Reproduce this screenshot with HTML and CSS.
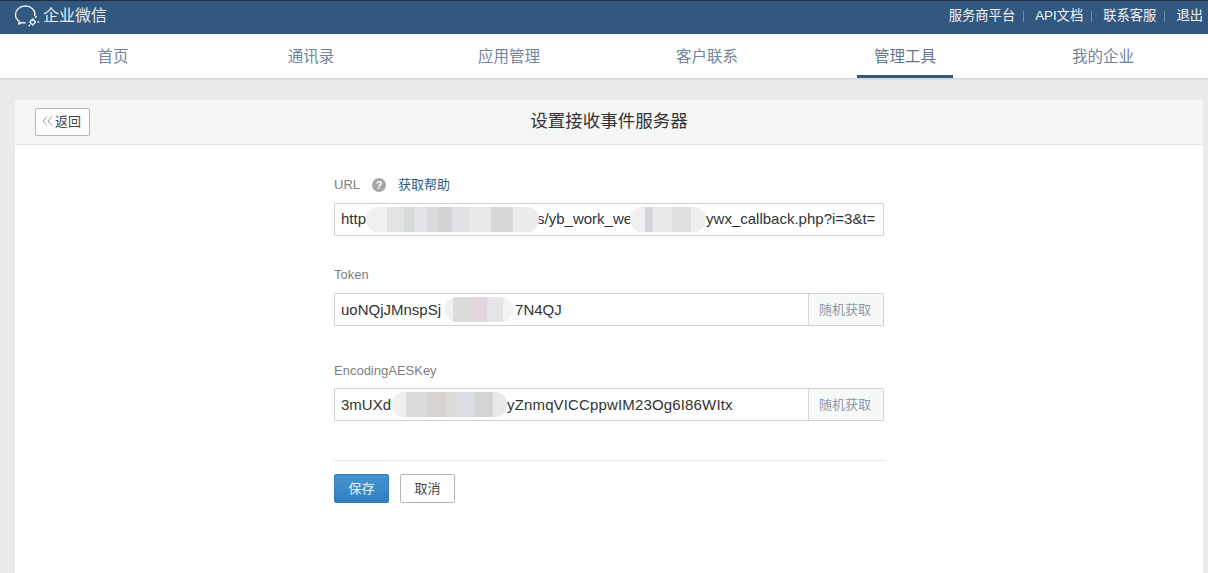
FILE: index.html
```html
<!DOCTYPE html>
<html lang="zh-CN">
<head>
<meta charset="utf-8">
<title>企业微信</title>
<link rel="stylesheet" href="styles.css">
</head>
<body>
<header class="topbar">
  <div class="brand">
    <svg class="logo" width="27" height="24" viewBox="0 0 27 24" fill="none" stroke="#e9eef3" stroke-width="1.4" stroke-linecap="round" stroke-linejoin="round">
      <path d="M20.8 11.5C21.6 6 17 2 11.4 2 5.8 2 1.5 6 1.5 10.8c0 2.7 1.4 5 3.7 6.4l-.5 2.8 3.2-1.5c1.1.3 2.2.4 3.4.4"/>
      <path d="M15.8 18l2.9-2.9 2.9 2.9-2.9 2.9z"/>
      <path d="M21.4 13.4l.9-.9M24 18h.8M15 21.8l.8-.8"/>
    </svg>
    <span class="brand-name">企业微信</span>
  </div>
  <nav class="toplinks">
    <a class="toplink">服务商平台</a><i class="sep"></i>
    <a class="toplink">API文档</a><i class="sep"></i>
    <a class="toplink">联系客服</a><i class="sep"></i>
    <a class="toplink">退出</a>
  </nav>
</header>
<nav class="mainnav">
  <a class="navitem"><span class="navlabel">首页</span></a>
  <a class="navitem"><span class="navlabel">通讯录</span></a>
  <a class="navitem"><span class="navlabel">应用管理</span></a>
  <a class="navitem"><span class="navlabel">客户联系</span></a>
  <a class="navitem active"><span class="navlabel">管理工具</span></a>
  <a class="navitem"><span class="navlabel">我的企业</span></a>
</nav>
<main class="card">
  <div class="cardhead">
    <button class="backbtn"><svg width="11" height="10" viewBox="0 0 11 10" fill="none" stroke="#999" stroke-width="1"><path d="M5 .5L1 5l4 4.5M10 .5L6 5l4 4.5"/></svg>返回</button>
    <h1 class="title">设置接收事件服务器</h1>
  </div>
  <form class="form">
    <div class="labelrow">
      <span class="label">URL</span>
      <span class="help">?</span>
      <a class="helplink">获取帮助</a>
    </div>
    <div class="field">
      <div class="value raised">http<span class="gap g1"></span>s/yb_work_we<span class="gap g2"></span>ywx_callback.php?i=3&amp;t=</div>
      <i class="mosaic m1"></i><i class="mosaic m2"></i>
    </div>
    <div class="label tokenlabel">Token</div>
    <div class="field">
      <div class="value">uoNQjJMnspSj<span class="gap g3"></span>7N4QJ</div>
      <button type="button" class="randbtn">随机获取</button>
      <i class="mosaic m3"></i>
    </div>
    <div class="label keylabel">EncodingAESKey</div>
    <div class="field">
      <div class="value">3mUXd<span class="gap g4"></span><span class="keytail">yZnmqVICCppwIM23Og6I86WItx</span></div>
      <button type="button" class="randbtn">随机获取</button>
      <i class="mosaic m4"></i>
    </div>
    <div class="actions">
      <button type="button" class="btn primary">保存</button>
      <button type="button" class="btn">取消</button>
    </div>
  </form>
</main>
</body>
</html>
```
FILE: styles.css
```css
* { box-sizing: border-box; }
html, body { height: 100%; }
body {
  margin: 0;
  height: 573px;
  overflow: hidden;
  background: #e9eaec;
  font-family: "Liberation Sans", "Noto Sans CJK SC", sans-serif;
  color: #333;
  display: flex;
  flex-direction: column;
}
.topbar {
  height: 34px;
  flex: none;
  background: #33587f;
  border-top: 1px solid #1d2c3c;
  display: flex;
  align-items: center;
  justify-content: space-between;
  padding: 0 5px 3px 14px;
  color: #fff;
}
.brand { display: flex; align-items: center; gap: 2px; }
.logo { display: block; }
.brand-name { font-size: 16px; line-height: 22px; color: #e6ebf1; }
.toplinks { display: flex; align-items: center; font-size: 13.3px; line-height: 20px; color: #eef2f6; }
.sep { width: 1px; height: 11px; background: #6d8aa8; margin: 0 11px 0 8px; }
.mainnav {
  flex: none;
  height: 44px;
  display: flex;
  padding: 0 6px 0 14px;
  background: #fff;
  box-shadow: 0 1px 2px rgba(0, 0, 0, .12);
  position: relative;
}
.navitem {
  flex: 1;
  display: flex;
  justify-content: center;
  font-size: 15.5px;
  color: #71849b;
}
.navlabel {
  display: block;
  width: 96px;
  text-align: center;
  line-height: 45px;
  height: 44px;
}
.navitem.active { color: #5f7690; }
.navitem.active .navlabel { border-bottom: 3px solid #33587f; }
.card {
  flex: 1;
  margin: 22px 5px 0 15px;
  background: #fff;
  border-radius: 3px 3px 0 0;
  min-height: 0;
}
.cardhead {
  height: 45px;
  background: #f5f6f6;
  border-bottom: 1px solid #e3e6ea;
  border-radius: 3px 3px 0 0;
  padding: 8px 0 0 20px;
  position: relative;
}
.backbtn {
  display: flex;
  align-items: center;
  gap: 2px;
  width: 55px;
  height: 28px;
  padding: 0 0 3px 6px;
  background: #fff;
  border: 1px solid #b4b6b8;
  border-radius: 2px;
  font: 13px "Liberation Sans", "Noto Sans CJK SC", sans-serif;
  color: #444;
}
.title {
  position: absolute;
  left: 0;
  right: 0;
  top: 0;
  margin: 0;
  text-align: center;
  font-size: 17.5px;
  font-weight: 400;
  line-height: 43px;
  color: #333;
}
.form { width: 550px; margin-left: 319px; padding-top: 31px; }
.labelrow { display: flex; align-items: center; height: 17px; margin-bottom: 10px; }
.label { font-size: 13px; line-height: 17px; color: #808080; }
.help {
  width: 14px;
  height: 14px;
  margin: 0 13px 0 12px;
  border-radius: 50%;
  background: #a6a6a6;
  color: #fff;
  font-size: 11px;
  font-weight: 700;
  line-height: 14px;
  text-align: center;
}
.helplink { font-size: 13px; line-height: 17px; color: #34597f; margin-left: -1px; }
.field {
  display: flex;
  height: 33px;
  background: #fff;
  border: 1px solid #cfd2d4;
  border-radius: 1px;
  position: relative;
  overflow: hidden;
}
.value {
  flex: 1;
  min-width: 0;
  padding-left: 6px;
  font-size: 15px;
  line-height: 31px;
  white-space: nowrap;
  overflow: hidden;
  color: #333;
}
.value.raised { line-height: 29px; }
.keytail { letter-spacing: .15px; }
.gap { display: inline-block; }
.g1 { width: 171px; }
.g2 { width: 74px; }
.g3 { width: 74px; }
.g4 { width: 116px; }
.randbtn {
  flex: none;
  width: 75px;
  padding: 0 2px 2px 0;
  border: 0;
  border-left: 1px solid #d6d8da;
  background: #f7f8f8;
  font: 13px "Liberation Sans", "Noto Sans CJK SC", sans-serif;
  color: #8d99a8;
}
.tokenlabel { margin-top: 30px; margin-bottom: 10px; }
.keylabel { margin-top: 36px; margin-bottom: 9px; }
.mosaic {
  position: absolute;
  top: 3px;
  height: 25px;
  border-radius: 12px;
  filter: blur(.4px);
}
.m1 {
  left: 31px;
  width: 173px;
  background: linear-gradient(90deg, #f0f0f0 0 12%, #e2e4e4 12% 22%, #d6dbd8 22% 28%, #e4e3e8 28% 35%, #dad8db 35% 42%, #d2d4d4 42% 50%, #e0e2e5 50% 60%, #e8eaea 60% 72%, #d6d9d7 72% 85%, #ececec 85% 100%);
}
.m2 {
  left: 295px;
  width: 76px;
  background: linear-gradient(90deg, #f0f0f0 0 20%, #d8d2da 20% 30%, #e8eaea 30% 55%, #dde0dd 55% 80%, #efefef 80% 100%);
}
.m3 {
  left: 110px;
  width: 68px;
  background: linear-gradient(90deg, #f0f0f0 0 12%, #d9dcd9 12% 35%, #e0d8de 35% 62%, #e6e4e6 62% 85%, #f2f2f2 85% 100%);
}
.m4 {
  left: 57px;
  width: 115px;
  background: linear-gradient(90deg, #f0f0f0 0 12%, #dadddb 12% 30%, #d8d4d2 30% 48%, #dddcdc 48% 58%, #dadde3 58% 72%, #d4d4d4 72% 88%, #e8e8e8 88% 100%);
}
.actions {
  display: flex;
  gap: 11px;
  margin-top: 39px;
  padding-top: 13px;
  border-top: 1px solid #e7e8ea;
}
.btn {
  width: 55px;
  height: 29px;
  padding: 0 0 2px;
  background: #fff;
  border: 1px solid #b4b6b8;
  border-radius: 2px;
  font: 13px "Liberation Sans", "Noto Sans CJK SC", sans-serif;
  color: #444;
}
.btn.primary {
  border-color: #2f7dbd;
  background: linear-gradient(#4694d1, #2f7fc1);
  color: #e8f1f8;
}
```
